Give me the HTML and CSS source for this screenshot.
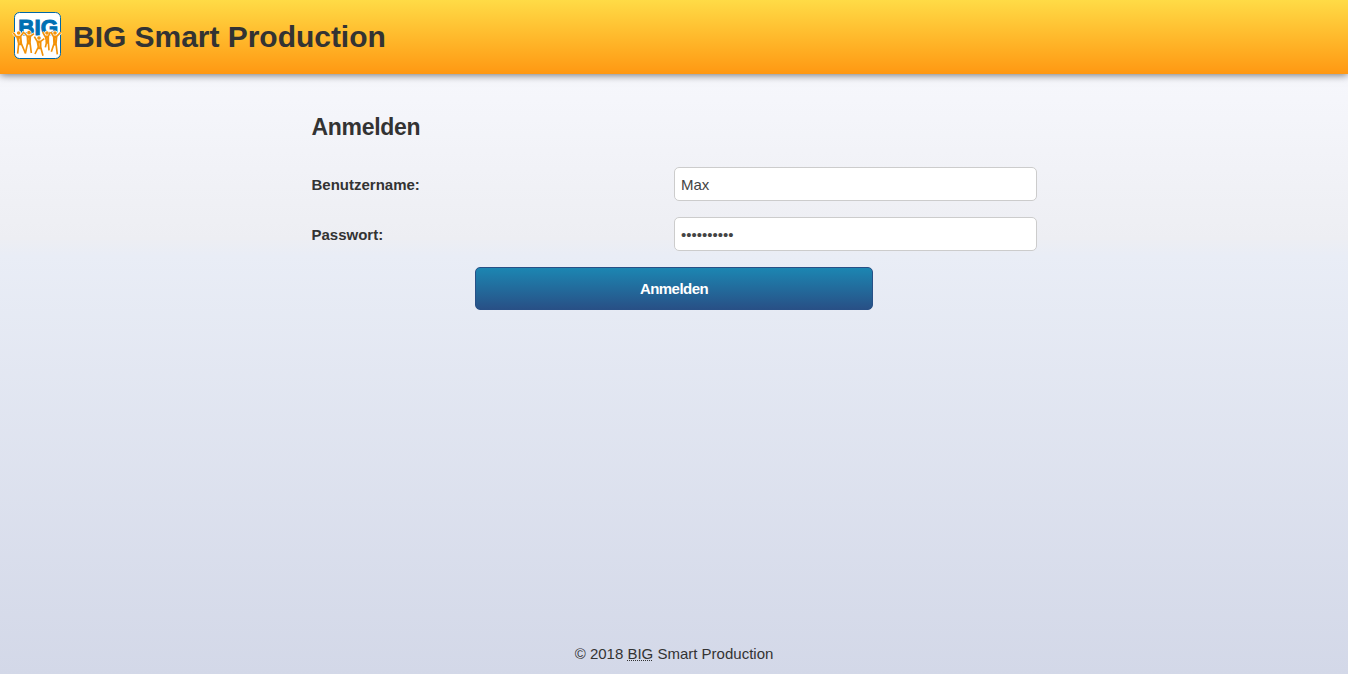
FILE: index.html
```html
<!DOCTYPE html>
<html lang="de">
<head>
<meta charset="utf-8">
<title>BIG Smart Production</title>
<link rel="stylesheet" href="styles.css">
</head>
<body>
<header class="header">
  <svg class="logo" viewBox="0 0 153 153" role="img" aria-label="BIG">
    <defs>
      <g id="people" stroke-linejoin="round">
        <path d="M4 68L13 80L26 79L36 65M15 80L20 101L17 131M26 79L28 101L40 129M18 84H25L26 103H21Z"/>
        <path d="M37 68L45 78L56 78L66 71M46 78L47 98L40 131M55 79L54 98L58 129M48 82H54L52 101H48Z"/>
        <path d="M67 80L75 93L86 94L97 86M76 95L79 111L69 132M86 95L86 111L93 137M78 97H85L84 115H79Z"/>
        <path d="M92 66L99 79L109 79L115 66M100 80L104 96L100 112M109 80L109 96L111 121M102 82H108L107 99H103Z"/>
        <path d="M117 66L124 79L134 79L146 67M125 80L126 101L118 125M134 80L132 101L136 133M127 82H133L131 104H127Z"/>
        <circle cx="20" cy="69" r="3"/>
        <circle cx="51" cy="68" r="3"/>
        <circle cx="81" cy="84" r="3"/>
        <circle cx="105" cy="69" r="3"/>
        <circle cx="129" cy="69" r="3"/>
      </g>
    </defs>
    <rect class="logo-frame" x="7.5" y="7.5" width="138" height="138" rx="15"/>
    <text class="logo-text" x="19" y="75" textLength="119" lengthAdjust="spacingAndGlyphs">BIG</text>
    <use class="people-outline" href="#people"/>
    <use class="people-body" href="#people"/>
  </svg>
  <h1 class="brand">BIG Smart Production</h1>
</header>
<main class="content">
  <h2 class="title">Anmelden</h2>
  <form class="form">
    <div class="row">
      <label class="label" for="user">Benutzername:</label>
      <input class="field" id="user" type="text" value="Max">
    </div>
    <div class="row">
      <label class="label" for="pass">Passwort:</label>
      <input class="field" id="pass" type="password" value="0123456789">
    </div>
    <button class="submit" type="button">Anmelden</button>
  </form>
</main>
<footer class="footer">© 2018 <abbr class="abbr">BIG</abbr> Smart Production</footer>
</body>
</html>
```
FILE: styles.css
```css
* { box-sizing: border-box; }

body {
  margin: 0;
  height: 100vh;
  display: flex;
  flex-direction: column;
  overflow: hidden;
  font: 15px/20px "Liberation Sans", Arial, sans-serif;
  color: #333;
  background: linear-gradient(#f9fafe 0, #f5f6fb 100px, #edeef3 238px, #e9edf6 256px, #d3d8e8 100%);
}

.header {
  flex: none;
  height: 74px;
  padding: 0 12px 3px;
  display: flex;
  align-items: center;
  gap: 10px;
  background: linear-gradient(#ffdb46, #ff9812);
  box-shadow: 0 1px 8px rgba(0, 0, 0, .55);
}

.logo { width: 51px; height: 51px; }
.logo-frame { fill: #fff; stroke: #0068a8; stroke-width: 3; }
.logo-text { font: bold 65px "Liberation Sans", Arial, sans-serif; fill: #0070b2; stroke: #0070b2; stroke-width: 3; }
.people-outline { fill: none; stroke: #fff; stroke-width: 9; }
.people-body { fill: none; stroke: #f39208; stroke-width: 5; }

.brand { margin: 3px 0 0; font-size: 30px; line-height: 40px; letter-spacing: -.03px; }

.content { width: 725px; margin: 0 auto; padding-top: 38px; flex: 1; }

.title { margin: 0 0 25px; font-size: 23px; line-height: 30px; letter-spacing: -.3px; }

.form { display: flex; flex-direction: column; gap: 16px; }

.row { display: grid; grid-template-columns: 1fr 1fr; align-items: center; }

.label { font-weight: bold; padding-top: 2px; }

.field {
  width: 363px;
  height: 34px;
  padding: 1px 6px 0 6.5px;
  border: 1px solid #ccc;
  border-radius: 5px;
  background: #fff;
  font: inherit;
  color: #444;
}

.submit {
  align-self: center;
  width: 398px;
  height: 43px;
  padding: 0 0 1px;
  border: 1px solid #285086;
  border-radius: 5px;
  background: linear-gradient(#1c86b2, #285086);
  font: bold 15px "Liberation Sans", Arial, sans-serif;
  letter-spacing: -.55px;
  color: #fff;
}

.footer { text-align: center; padding-bottom: 10px; }

.abbr { text-decoration: underline dotted 1px; text-underline-offset: 1px; text-decoration-skip-ink: none; }
```
